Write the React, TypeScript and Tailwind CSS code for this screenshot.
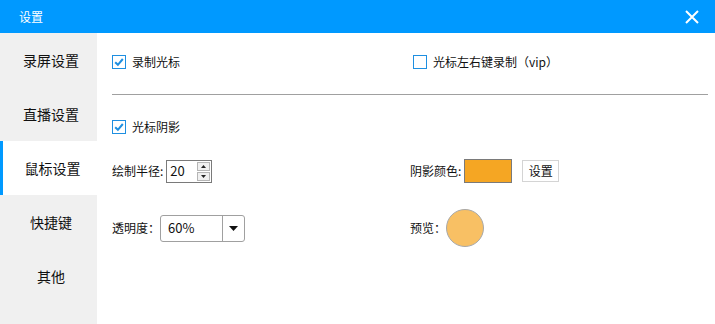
import React from 'react';

const font = { fontFamily: '"Noto Sans CJK SC", "Noto Sans", sans-serif' };

const menu = ['录屏设置', '直播设置', '鼠标设置', '快捷键', '其他'];

const CheckBox: React.FC<{ checked?: boolean }> = ({ checked }) => (
  <div className="w-[14px] h-[14px] border border-[#1e8fe1] bg-white flex items-center justify-center shrink-0">
    {checked && (
      <svg width="10" height="10" viewBox="0 0 10 10">
        <path d="M1.2 5.2 L3.9 7.8 L8.8 2" fill="none" stroke="#1e8fe1" strokeWidth="2" />
      </svg>
    )}
  </div>
);

const App: React.FC = () => {
  const active = 2;

  return (
    <div className="w-[715px] h-[324px] bg-white flex flex-col overflow-hidden text-[#111]" style={font}>
      {/* Title bar */}
      <div className="h-[33px] bg-[#0099ff] flex items-center justify-between pl-[19px] pr-[16px] shrink-0">
        <span className="text-white text-[12px]">设置</span>
        <svg width="14" height="14" viewBox="0 0 14 14">
          <path d="M1 1 L13 13 M13 1 L1 13" stroke="white" strokeWidth="2" />
        </svg>
      </div>

      <div className="flex flex-1">
        {/* Sidebar */}
        <div className="w-[97px] bg-[#f0f0f0] flex flex-col">
          {menu.map((m, i) => (
            <div
              key={m}
              className={`h-[54px] flex items-center justify-center pl-[5px] text-[14px] ${
                i === active ? 'bg-white border-l-[3px] border-[#0099ff] pl-[2px]' : ''
              }`}
            >
              {m}
            </div>
          ))}
        </div>

        {/* Content */}
        <div className="flex-1 pl-[15px] pr-[7px] pt-[19px] text-[12px]">
          <div className="grid grid-cols-[298px_1fr] h-[20px] items-center">
            <label className="flex items-center gap-[6px]">
              <CheckBox checked />
              <span>录制光标</span>
            </label>
            <label className="flex items-center gap-[6px] ml-[3px]">
              <CheckBox />
              <span>光标左右键录制（vip）</span>
            </label>
          </div>

          <div className="mt-[22px] h-px bg-[#a0a0a0]" />

          <div className="mt-[22px] h-[20px] flex items-center gap-[6px]">
            <CheckBox checked />
            <span>光标阴影</span>
          </div>

          <div className="mt-[22px] grid grid-cols-[298px_1fr] h-[24px] items-center">
            <div className="flex items-center">
              <span>绘制半径:</span>
              <div className="ml-[3px] w-[46px] h-[23px] border border-[#7a7a7a] flex items-center justify-between pl-[3px] pr-[1px]">
                <span className="text-[13px]">20</span>
                <div className="flex flex-col gap-px">
                  <div className="w-[13px] h-[9px] bg-[#f0f0f0] border border-[#b5b5b5] flex items-center justify-center">
                    <svg width="5" height="3" viewBox="0 0 5 3"><path d="M0 3 L2.5 0 L5 3 Z" fill="#222" /></svg>
                  </div>
                  <div className="w-[13px] h-[9px] bg-[#f0f0f0] border border-[#b5b5b5] flex items-center justify-center">
                    <svg width="5" height="3" viewBox="0 0 5 3"><path d="M0 0 L5 0 L2.5 3 Z" fill="#222" /></svg>
                  </div>
                </div>
              </div>
            </div>
            <div className="flex items-center">
              <span>阴影颜色:</span>
              <div className="ml-[3px] w-[48px] h-[24px] bg-[#f5a623] border border-[#7a7a7a]" />
              <button className="ml-[10px] w-[37px] h-[22px] border border-[#d4d4d4] bg-white text-[12px] flex items-center justify-center">
                设置
              </button>
            </div>
          </div>

          <div className="mt-[26px] grid grid-cols-[298px_1fr] h-[27px] items-center">
            <div className="flex items-center">
              <span>透明度：</span>
              <div className="w-[85px] h-[27px] border border-[#a0a0a0] rounded-[3px] flex items-stretch">
                <div className="flex-1 flex items-center pl-[7px] text-[13px]">60%</div>
                <div className="w-[22px] border-l border-[#a0a0a0] flex items-center justify-center">
                  <svg width="9" height="5" viewBox="0 0 9 5"><path d="M0 0 L9 0 L4.5 5 Z" fill="#111" /></svg>
                </div>
              </div>
            </div>
            <div className="flex items-center">
              <span>预览：</span>
              <div className="w-[38px] h-[38px] rounded-full bg-[#f8c064] border border-[#a8a8a8]" />
            </div>
          </div>
        </div>
      </div>
    </div>
  );
};

export default App;
